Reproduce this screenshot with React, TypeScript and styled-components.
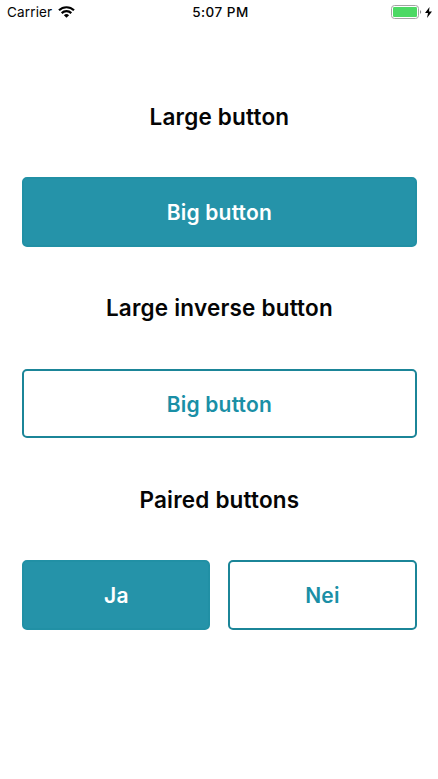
import React from "react";
import styled, { createGlobalStyle } from "styled-components";

const GlobalStyle = createGlobalStyle`
  * { box-sizing: border-box; }
  body { margin: 0; background: #fff; font-family: Inter, sans-serif; color: #050505; }
`;
const Screen = styled.div`
  width: 438px;
  height: 779px;
  overflow: hidden;
  background: #fff;
`;
const StatusBar = styled.header`
  height: 24px;
  padding: 0 6px 0 7px;
  display: grid;
  grid-template-columns: 1fr auto 1fr;
  align-items: center;
`;
const Carrier = styled.div`
  display: flex;
  align-items: center;
  gap: 6px;
  font-size: 13.5px;
  letter-spacing: 0.15px;
`;
const Clock = styled.div`
  padding-left: 2px;
  font-size: 13.5px;
  font-weight: 500;
  letter-spacing: 0.5px;
`;
const Power = styled.div`
  display: flex;
  justify-content: flex-end;
  align-items: center;
  gap: 3px;
`;
const Content = styled.main`
  padding: 69px 21.5px 0 22.3px;
`;
const Section = styled.section`
  height: 191.4px;
`;
const Title = styled.h2`
  margin: 0 0 36.2px;
  height: 48px;
  line-height: 48px;
  font-size: 22.5px;
  font-weight: 600;
  letter-spacing: 0.2px;
  text-align: center;
`;
const Row = styled.div`
  display: flex;
  gap: 18px;
`;
const Button = styled.button<{ $inverse?: boolean }>`
  flex: 1;
  height: 69.6px;
  padding: 2px 0 0;
  border: 2px solid ${(p) => (p.$inverse ? "#1b8598" : "#2190a5")};
  border-radius: 5px;
  background: ${(p) => (p.$inverse ? "#fff" : "#2593a9")};
  color: ${(p) => (p.$inverse ? "#1a8fa6" : "#fff")};
  font: 600 21px Inter, sans-serif;
  letter-spacing: 0.2px;
`;

export default function App() {
  return (
    <Screen>
      <GlobalStyle />
      <StatusBar>
        <Carrier>
          Carrier
          <svg width="17" height="12" viewBox="0 0 17 12" fill="none" stroke="#000" strokeWidth="2.2">
            <path d="M1 4.3a10.8 10.8 0 0 1 15 0M3.7 7.1a7 7 0 0 1 9.6 0" />
            <path d="M8.5 11.8 5.9 9.2a3.8 3.8 0 0 1 5.2 0z" fill="#000" stroke="none" />
          </svg>
        </Carrier>
        <Clock>5:07 PM</Clock>
        <Power>
          <svg width="31" height="14" viewBox="0 0 31 14">
            <rect x=".5" y=".5" width="27" height="13" rx="3" fill="none" stroke="#a3a3a3" />
            <rect x="2" y="2" width="24" height="10" rx="1.2" fill="#4cd964" />
            <path d="M29 5q2.4 2 0 4z" fill="#888" />
          </svg>
          <svg width="7" height="11" viewBox="0 0 7 11"><path d="M4.5 0 0 6h3L2 11l5-6.5H4z" /></svg>
        </Power>
      </StatusBar>
      <Content>
        <Section>
          <Title>Large button</Title>
          <Row><Button>Big button</Button></Row>
        </Section>
        <Section>
          <Title>Large inverse button</Title>
          <Row><Button $inverse>Big button</Button></Row>
        </Section>
        <Section>
          <Title>Paired buttons</Title>
          <Row><Button>Ja</Button><Button $inverse>Nei</Button></Row>
        </Section>
      </Content>
    </Screen>
  );
}
